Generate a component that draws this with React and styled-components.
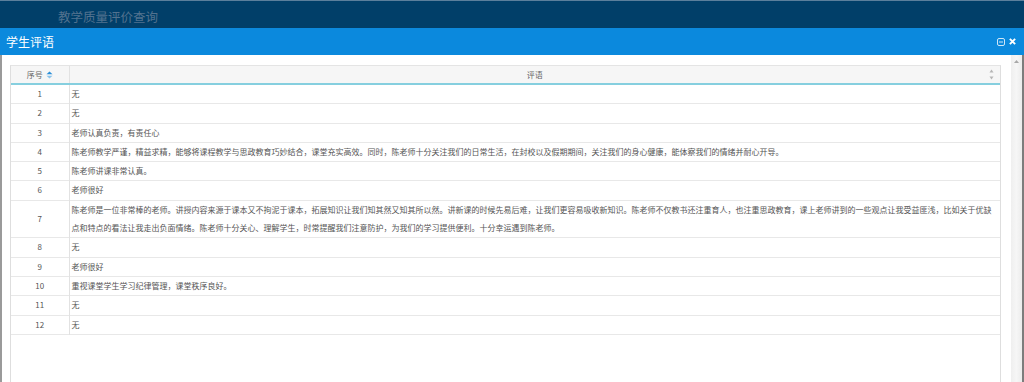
import styled, { createGlobalStyle } from "styled-components";

const GlobalStyle = createGlobalStyle`
  html, body {
    margin: 0;
    padding: 0;
    height: 382px;
    overflow: hidden;
    background: #013f69;
    font-family: "Noto Sans CJK SC", "Noto Sans", sans-serif;
  }
  #root {
    height: 382px;
  }
`;

const Page = styled.div`
  height: 382px;
  display: flex;
  flex-direction: column;
`;

const TopBar = styled.div`
  height: 28px;
  flex: none;
  background: #013f69;
  border-top: 1px solid #5b7f9c;
  box-sizing: border-box;
  display: flex;
  align-items: center;
  padding-left: 58px;
  padding-top: 4px;
  color: #52728f;
  font-size: 12.5px;
`;

const Dialog = styled.div`
  flex: 1;
  display: flex;
  flex-direction: column;
  min-height: 0;
`;

const TitleBar = styled.div`
  height: 27px;
  flex: none;
  background: #0b89dd;
  display: flex;
  align-items: center;
  justify-content: space-between;
  padding: 0 8px 0 6px;
  color: #fff;
  font-size: 12px;
`;

const Tools = styled.div`
  display: flex;
  align-items: center;
  gap: 4px;
`;

const Body = styled.div`
  flex: 1;
  display: flex;
  background: #fff;
  border-left: 2px solid #9a9a9a;
  border-right: 2px solid #7d7d7d;
  min-height: 0;
`;

const Content = styled.div`
  flex: 1;
  padding: 10px 10px 0 8px;
  display: flex;
  flex-direction: column;
`;

const Grid = styled.div`
  flex: 1;
  border-left: 1px solid #dedede;
  border-right: 1px solid #dedede;
  border-top: 1px solid #e4e4e4;
`;

const Table = styled.table`
  width: 100%;
  border-collapse: collapse;
  table-layout: fixed;
  font-size: 8px;
  color: #555;
`;

const HeadCell = styled.th`
  height: 17px;
  padding: 0;
  background: #f6f6f6;
  border-bottom: 2px solid #86cfdf;
  border-right: ${(p) => (p.$last ? "none" : "1px solid #e2e2e2")};
  font-weight: normal;
  color: #666;
  text-align: center;
  position: relative;
`;

const HeadInner = styled.span`
  display: inline-flex;
  align-items: center;
  gap: 3px;
`;

const SideArrows = styled.span`
  position: absolute;
  right: 6px;
  top: 3px;
  display: flex;
`;

const Row = styled.tr`
  border-bottom: 1px solid #e8e8e8;
`;

const Cell = styled.td`
  padding: 0 2px;
  line-height: 18.3px;
  text-align: ${(p) => (p.$center ? "center" : "left")};
  border-right: ${(p) => (p.$center ? "1px solid #e2e2e2" : "none")};
  vertical-align: middle;
  word-break: break-all;
`;

const ScrollTrack = styled.div`
  width: 11px;
  flex: none;
  background: linear-gradient(to right, #efefef, #f6f6f6 50%, #ececec);
  display: flex;
  justify-content: center;
  padding-top: 5px;
  box-sizing: border-box;
`;

const SortIcon = () => (
  <svg width="7" height="8" viewBox="0 0 7 8">
    <path d="M3.5 0.5 L6.5 3.3 H0.5 Z" fill="#2b8fd8" />
    <path d="M3.5 7.5 L6.5 4.7 H0.5 Z" fill="#8cc4ec" />
  </svg>
);

const GrayArrows = () => (
  <svg width="5" height="11" viewBox="0 0 5 11">
    <path d="M2.5 0.5 L4.5 3.5 H0.5 Z" fill="#b5b5b5" />
    <path d="M2.5 10.5 L4.5 7.5 H0.5 Z" fill="#b5b5b5" />
  </svg>
);

const comments = [
  "无",
  "无",
  "老师认真负责，有责任心",
  "陈老师教学严谨，精益求精，能够将课程教学与思政教育巧妙结合，课堂充实高效。同时，陈老师十分关注我们的日常生活，在封校以及假期期间，关注我们的身心健康，能体察我们的情绪并耐心开导。",
  "陈老师讲课非常认真。",
  "老师很好",
  "陈老师是一位非常棒的老师。讲授内容来源于课本又不拘泥于课本，拓展知识让我们知其然又知其所以然。讲新课的时候先易后难，让我们更容易吸收新知识。陈老师不仅教书还注重育人，也注重思政教育，课上老师讲到的一些观点让我受益匪浅，比如关于优缺点和特点的看法让我走出负面情绪。陈老师十分关心、理解学生，时常提醒我们注意防护，为我们的学习提供便利。十分幸运遇到陈老师。",
  "无",
  "老师很好",
  "重视课堂学生学习纪律管理，课堂秩序良好。",
  "无",
  "无",
];

export default function App() {
  return (
    <Page>
      <GlobalStyle />
      <TopBar>教学质量评价查询</TopBar>
      <Dialog>
        <TitleBar>
          <span>学生评语</span>
          <Tools>
            <svg width="8" height="8" viewBox="0 0 8 8">
              <rect x="0.5" y="0.5" width="7" height="7" rx="1.5" fill="none" stroke="#cfe6f7" />
              <path d="M2 4 H6" stroke="#cfe6f7" />
            </svg>
            <svg width="7" height="7" viewBox="0 0 8 8">
              <path d="M1 1 L7 7 M7 1 L1 7" stroke="#fff" strokeWidth="2.2" />
            </svg>
          </Tools>
        </TitleBar>
        <Body>
          <Content>
            <Grid>
              <Table>
                <colgroup>
                  <col style={{ width: 58 }} />
                  <col />
                </colgroup>
                <thead>
                  <tr>
                    <HeadCell>
                      <HeadInner>
                        序号
                        <SortIcon />
                      </HeadInner>
                    </HeadCell>
                    <HeadCell $last>
                      评语
                      <SideArrows>
                        <GrayArrows />
                      </SideArrows>
                    </HeadCell>
                  </tr>
                </thead>
                <tbody>
                  {comments.map((text, i) => (
                    <Row key={i}>
                      <Cell $center>{i + 1}</Cell>
                      <Cell>{text}</Cell>
                    </Row>
                  ))}
                </tbody>
              </Table>
            </Grid>
          </Content>
          <ScrollTrack>
            <svg width="5" height="3" viewBox="0 0 5 3">
              <path d="M2.5 0 L5 3 H0 Z" fill="#a8a8a8" />
            </svg>
          </ScrollTrack>
        </Body>
      </Dialog>
    </Page>
  );
}
